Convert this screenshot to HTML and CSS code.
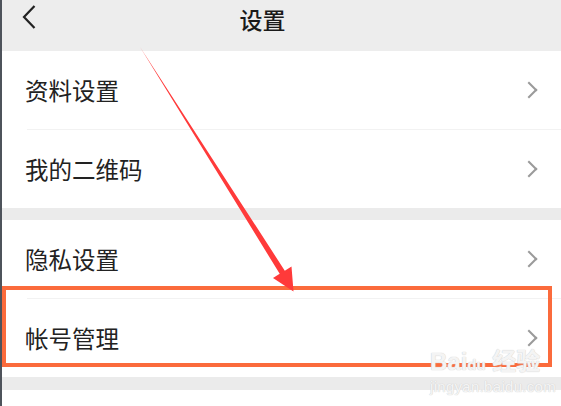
FILE: index.html
```html
<!DOCTYPE html>
<html lang="zh-CN">
<head>
    <meta charset="UTF-8" />
    <meta name="viewport" content="width=device-width, initial-scale=1">
    <link rel="stylesheet" href="styles.css">
</head>
<body>

    <section class="screen">
        <header class="topbar">
            <span class="back">
                <svg width="14" height="24" viewBox="0 0 14 24"><path d="M12.5 1 L2 12 L12.5 23" fill="none" stroke="#222" stroke-width="2.2"/></svg>
            </span>
            <h1 class="title">设置</h1>
        </header>

        <div class="group">
            <div class="item"><span>资料设置</span><i class="chev"></i></div>
            <div class="item"><span>我的二维码</span><i class="chev"></i></div>
        </div>

        <div class="group">
            <div class="item"><span>隐私设置</span><i class="chev"></i></div>
            <div class="item"><span>帐号管理</span><i class="chev"></i></div>
        </div>

        <div class="group tail"></div>

        <!-- annotation drawn over the screenshot -->
        <div class="mark"></div>
        <svg class="arrow" width="561" height="406" viewBox="0 0 561 406">
            <polygon points="140,47 284.8,270.7 291.5,266.5 293.5,291.5 273,278 279.7,273.8" fill="#ff3a3a"/>
        </svg>

        <div class="wm">
            <div class="wm-top">Bai<span class="paw">du</span> 经验</div>
            <div class="wm-url">jingyan.baidu.com</div>
        </div>
    </section>

</body>
</html>
```

FILE: styles.css
```css
html,
body {
    padding: 0;
    margin: 0;
    height: 100%;
}
body {
    font-family: "Noto Sans CJK SC", "Noto Sans", sans-serif;
    color: #222;
    background: #fff;
}
.screen {
    position: relative;
    height: 406px;
    overflow: hidden;
    border-left: 2px solid #4e535b;
    background: #fff;
}
.topbar {
    height: 51px;
    background: #ededed;
    display: flex;
    align-items: center;
    position: relative;
}
.back {
    display: flex;
    padding-left: 20px;
    margin-top: -17px;
}
.title {
    position: absolute;
    left: 0;
    right: 38px;
    top: 2px;
    margin: 0;
    text-align: center;
    font-size: 23px;
    font-weight: 500;
    color: #1a1a1a;
}
.group {
    background: #fff;
    border-bottom: 12px solid #ebebeb;
}
.group + .group {
    border-bottom-width: 13px;
}
.group.tail {
    border: 0;
}
.item {
    height: 78px;
    margin-left: 25px;
    padding-right: 22px;
    display: flex;
    align-items: center;
    justify-content: space-between;
    font-size: 23.5px;
}
.item + .item {
    border-top: 1px solid #f2f2f2;
}
.item span {
    margin-left: -2px;
}
.chev {
    width: 10px;
    height: 10px;
    border-top: 2px solid #9a9a9a;
    border-right: 2px solid #9a9a9a;
    transform: rotate(45deg);
    margin-right: 4px;
}
.mark {
    position: absolute;
    left: 0;
    top: 286px;
    width: 542px;
    height: 73px;
    border: 4px solid #fb6b3c;
}
.arrow {
    position: absolute;
    left: -2px;
    top: 0;
}
.wm {
    position: absolute;
    left: 428px;
    top: 348px;
    color: rgba(255, 255, 255, 0.8);
    text-shadow: 0 0 1px #d0d0d0, 0 0 1px #d0d0d0;
    font-family: "Liberation Sans", "Noto Sans CJK SC", sans-serif;
}
.wm-top {
    font-size: 24px;
    font-weight: bold;
    line-height: 28px;
}
.paw {
    font-size: 15px;
}
.wm-url {
    font-size: 15px;
    line-height: 16px;
    letter-spacing: 0.3px;
}
```
